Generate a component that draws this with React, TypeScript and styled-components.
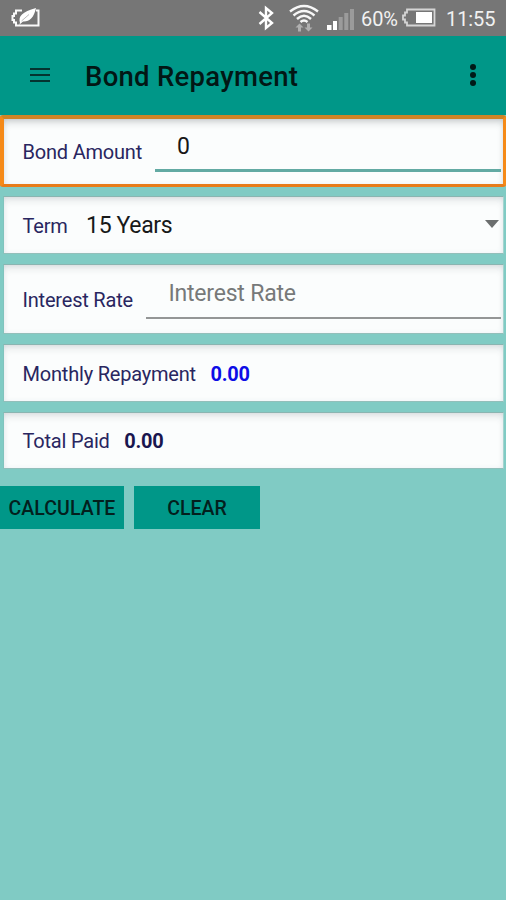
import React from "react";
import styled, { createGlobalStyle } from "styled-components";

const GlobalStyle = createGlobalStyle`
  * { box-sizing: border-box; }
  body { margin: 0; background: #80cbc4; font-family: Roboto, "Liberation Sans", sans-serif; }
`;

const Screen = styled.main`
  width: 100%;
  height: 900px;
  overflow: hidden;
  background: #80cbc4;
`;

const StatusBar = styled.header`
  display: flex;
  align-items: center;
  height: 36px;
  padding: 0 10px 0 11px;
  background: #767676;
  color: #f1f1f1;
`;

const StatusIcons = styled.div`
  display: flex;
  align-items: center;
  margin-left: auto;
  svg { display: block; flex: none; }
`;

const Radios = styled.div`
  display: flex;
  align-items: center;
  gap: 14px;
  margin-right: 7px;
`;

const StatusText = styled.span<{ $width: number; $left: number }>`
  width: ${(p) => p.$width}px;
  margin-left: ${(p) => p.$left}px;
  padding-top: 2px;
  font-size: 20px;
  line-height: 24px;
  letter-spacing: -0.1px;
  white-space: nowrap;
`;

const AppBar = styled.nav`
  display: flex;
  align-items: center;
  height: 79px;
  padding: 0 29px 0 30px;
  background: #009788;
  color: #021715;
`;

const Title = styled.h1`
  margin: 2px auto 0 35px;
  font-size: 27.5px;
  font-weight: 500;
  line-height: 32px;
  letter-spacing: 0.28px;
  white-space: nowrap;
`;

const IconButton = styled.button`
  display: block;
  margin-top: -2px;
  padding: 0;
  border: 0;
  background: none;
  color: inherit;
  svg { display: block; }
`;

const Form = styled.section`
  display: flex;
  flex-direction: column;
  gap: 10px;
`;

const Card = styled.div<{ $height: number; $focused?: boolean }>`
  display: flex;
  align-items: center;
  height: ${(p) => p.$height}px;
  margin: ${(p) => (p.$focused ? "0 0 -1px" : "0 2px 0 3px")};
  padding: 0 2px 0 ${(p) => (p.$focused ? 18.5 : 18.5)}px;
  border: ${(p) => (p.$focused ? 4 : 1)}px solid;
  border-color: ${(p) => (p.$focused ? "#cf8426 #f58a18 #e77c1a #f58a18" : "#8ab5b1 #a4d4cf #92bfba #80c4bd")};
  border-right-width: ${(p) => (p.$focused ? 3 : 1)}px;
  border-bottom-width: ${(p) => (p.$focused ? 3 : 1)}px;
  border-radius: ${(p) => (p.$focused ? 3 : 0)}px;
  background: #fbfdfd;
  box-shadow: inset 0 5px 8px -3px rgba(40, 50, 55, ${(p) => (p.$focused ? 0.28 : 0.16)}),
    inset 0 0 5px rgba(190, 205, 220, 0.22);
`;

const Label = styled.label`
  padding-top: 1px;
  color: #292660;
  font-size: 20px;
  line-height: 24px;
  letter-spacing: -0.2px;
  white-space: nowrap;
`;

const Field = styled.div<{ $active?: boolean }>`
  flex: 1;
  align-self: flex-start;
  height: ${(p) => (p.$active ? 53 : 54)}px;
  margin-left: 13px;
  padding: ${(p) => (p.$active ? "14px 0 0 22px" : "15px 0 0 22.5px")};
  border-bottom: ${(p) => (p.$active ? "3px solid #62aaa3" : "2px solid #949696")};
  color: ${(p) => (p.$active ? "#171717" : "#777979")};
  font-size: 23px;
  line-height: 28px;
  letter-spacing: -0.2px;
  white-space: nowrap;
`;

const Select = styled.div`
  display: flex;
  flex: 1;
  align-items: center;
  justify-content: space-between;
  margin-left: 18.5px;
  padding: 2px 2px 0 0;
  color: #171919;
  font-size: 23px;
  line-height: 28px;
  letter-spacing: -0.35px;
`;

const Caret = styled.span`
  margin-top: -5px;
  border: 7px solid transparent;
  border-top: 8px solid #6b6e6e;
  border-bottom: 0;
`;

const Result = styled.output<{ $color: string }>`
  margin-left: 14.5px;
  padding-top: 1px;
  color: ${(p) => p.$color};
  font-size: 20px;
  font-weight: 700;
  line-height: 24px;
  letter-spacing: -0.2px;
`;

const Actions = styled.div`
  display: flex;
  gap: 10px;
  margin-top: 17px;
`;

const ActionButton = styled.button<{ $width: number }>`
  width: ${(p) => p.$width}px;
  height: 43px;
  padding: 3px 0 0;
  border: 0;
  background: #009788;
  color: #03201d;
  font-family: inherit;
  font-size: 19.5px;
  font-weight: 500;
  line-height: 24px;
  letter-spacing: 0.05px;
  white-space: nowrap;
`;

const PowerSaverIcon = () => (
  <svg width="30" height="20" viewBox="0 0 30 20" fill="none">
    <path d="M11 2.5H5V5.5H3V8H1.5V12H3V14.5H5V17.5H27.5V2.5H25" stroke="#fafafa" strokeWidth="2" />
    <path d="M9 15C7 8 11 4 25 0C23 10 18 14 12 13.5L8 17Z" fill="#fff" />
    <path d="M10.5 13L18 6.5" stroke="#aaa" strokeWidth="0.8" />
  </svg>
);

const BluetoothIcon = () => (
  <svg width="16" height="26" viewBox="0 0 16 26" fill="none" stroke="#fff" strokeWidth="2.4">
    <path d="M1.5 7L14 18L8 23V3L14 8L1.5 19" />
  </svg>
);

const WifiIcon = () => (
  <svg width="32" height="30" viewBox="0 0 32 30" fill="none">
    <path d="M2 8.5Q16-2.5 30 8.5M5.5 12.5Q16 3.5 26.5 12.5M9 16Q16 9.5 23 16M12.5 19Q16 16 19.5 19" stroke="#f7f7f7" strokeWidth="2.4" />
    <path d="M11.5 20.5L15.5 24.5H13V28.5H10V24.5H7.5ZM20.5 28.5L16.5 24.5H19V20.5H22V24.5H24.5Z" fill="#b0b0b0" />
  </svg>
);

const SignalIcon = () => (
  <svg width="28" height="24" viewBox="0 0 28 24">
    <path d="M0 19H4.5V24H0ZM6 15H10V24H6Z" fill="#fff" />
    <path d="M11.7 11H15.7V24H11.7ZM17.3 7H21.3V24H17.3ZM23 3H27V24H23Z" fill="#9b9b9b" />
  </svg>
);

const BatteryIcon = () => (
  <svg width="34" height="20" viewBox="0 0 34 20">
    <path d="M5 1.5H32.5V17.5H5V14.5H3V11.5H1V7.5H3V4.5H5Z" fill="none" stroke="#d5d5d5" strokeWidth="1.8" />
    <path d="M14 4H30V15H14Z" fill="#fff" />
  </svg>
);

const MenuIcon = () => (
  <svg width="20" height="16" viewBox="0 0 20 16" fill="none" stroke="#04332f" strokeWidth="2">
    <path d="M0 2H20M0 8H20M0 14H20" />
  </svg>
);

const MoreIcon = () => (
  <svg width="8" height="24" viewBox="0 0 8 24" fill="#001a17">
    <circle cx="4" cy="4" r="3" />
    <circle cx="4" cy="12" r="3" />
    <circle cx="4" cy="20" r="3" />
  </svg>
);

export default function App() {
  return (
    <Screen>
      <GlobalStyle />
      <StatusBar>
        <PowerSaverIcon />
        <StatusIcons>
          <Radios>
            <BluetoothIcon />
            <WifiIcon />
          </Radios>
          <SignalIcon />
          <StatusText $width={41} $left={6}>60%</StatusText>
          <BatteryIcon />
          <StatusText $width={50} $left={10}>11:55</StatusText>
        </StatusIcons>
      </StatusBar>
      <AppBar>
        <IconButton aria-label="Menu"><MenuIcon /></IconButton>
        <Title>Bond Repayment</Title>
        <IconButton aria-label="More options"><MoreIcon /></IconButton>
      </AppBar>
      <Form>
        <Card $height={72} $focused>
          <Label>Bond Amount</Label>
          <Field $active>0</Field>
        </Card>
        <Card $height={58}>
          <Label>Term</Label>
          <Select>15 Years<Caret /></Select>
        </Card>
        <Card $height={70}>
          <Label>Interest Rate</Label>
          <Field>Interest Rate</Field>
        </Card>
        <Card $height={58}>
          <Label>Monthly Repayment</Label>
          <Result $color="#0d0de6">0.00</Result>
        </Card>
        <Card $height={57}>
          <Label>Total Paid</Label>
          <Result $color="#1a164f">0.00</Result>
        </Card>
      </Form>
      <Actions>
        <ActionButton $width={124}>CALCULATE</ActionButton>
        <ActionButton $width={126}>CLEAR</ActionButton>
      </Actions>
    </Screen>
  );
}
